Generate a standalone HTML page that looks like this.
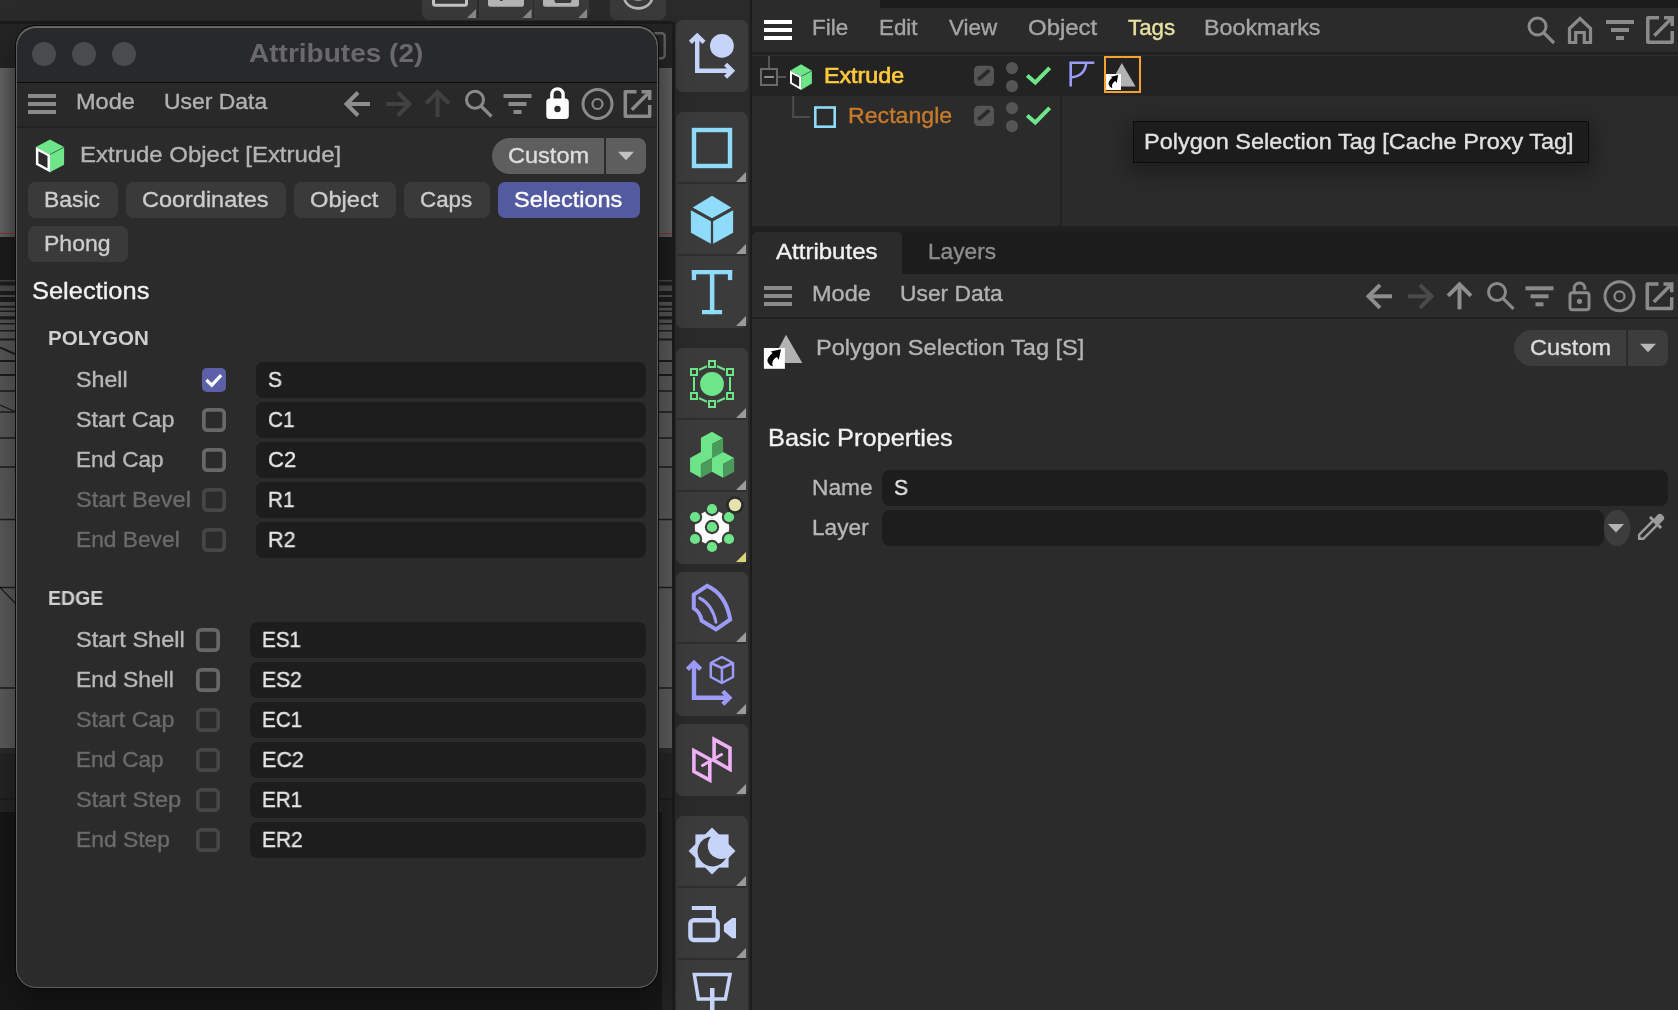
<!DOCTYPE html>
<html lang="en"><head><meta charset="utf-8"><title>Attributes</title>
<style>
*{box-sizing:border-box;margin:0;padding:0}
html,body{width:1678px;height:1010px;overflow:hidden;background:#1d1d1d}
body{position:relative;font-family:"Liberation Sans", sans-serif;-webkit-font-smoothing:antialiased}
.a{position:absolute}
.t{position:absolute;white-space:pre;line-height:1;display:block;transform-origin:0 50%;will-change:transform}
svg{position:absolute;left:0;top:0;overflow:visible}
.fld{position:absolute;background:#1d1d1d;border-radius:7px;height:36px}
.tab{position:absolute;background:#3a3a3a;border-radius:7px;height:36px}
.cb{position:absolute;width:24px;height:24px;border-radius:5.5px;border:3.6px solid #686868}
.cb.d{border-color:#464646}
.tb{position:absolute;left:676px;width:72px;background:#3b3b3b;border-radius:7px}
.dv{position:absolute;left:678px;width:68px;height:2px;background:#2e2e2e}
</style></head>
<body>
<div class="a" style="left:0;top:0;width:673px;height:1010px;background:#1a1a1a"></div>
<div class="a" style="left:0;top:0;width:673px;height:21px;background:#2a2a2a"></div>
<div class="a" style="left:0;top:21.5px;width:673px;height:2.5px;background:#1b1b1b"></div>
<div class="a" style="left:0;top:24px;width:673px;height:44px;background:#242424"></div>
<div class="a" style="left:0;top:68px;width:673px;height:168.5px;background:linear-gradient(90deg,#666 0,#585858 12px,#525252 16px,#525252 658px,#5a5a5a 662px,#606060 673px)"></div>
<div class="a" style="left:0;top:233px;width:673px;height:1.3px;background:#8c3030"></div>
<div class="a" style="left:0;top:236.5px;width:673px;height:44px;background:#1c1c1c"></div>
<div class="a" style="left:0;top:280px;width:673px;height:468px;background:linear-gradient(180deg,#464646 0,#525252 20px,#585858 60px,#5b5b5b 250px,#5c5c5c 468px)"></div>
<svg width="673" height="1010" viewBox="0 0 673 1010"><line x1="0" y1="283.5" x2="673" y2="283.5" stroke="#1d1d1d" stroke-width="4" /><line x1="0" y1="293" x2="673" y2="293" stroke="#1d1d1d" stroke-width="4" /><line x1="0" y1="299.5" x2="673" y2="299.5" stroke="#1d1d1d" stroke-width="5" /><line x1="0" y1="306.7" x2="673" y2="306.7" stroke="#1d1d1d" stroke-width="2" /><line x1="0" y1="311.3" x2="673" y2="311.3" stroke="#1d1d1d" stroke-width="1.6" /><line x1="0" y1="317.8" x2="673" y2="317.8" stroke="#1d1d1d" stroke-width="3.2" /><line x1="0" y1="323.8" x2="673" y2="323.8" stroke="#1d1d1d" stroke-width="1.6" /><line x1="0" y1="330.8" x2="673" y2="330.8" stroke="#1d1d1d" stroke-width="1.6" /><line x1="0" y1="339.5" x2="673" y2="339.5" stroke="#1d1d1d" stroke-width="2" /><line x1="0" y1="361" x2="673" y2="361" stroke="#1d1d1d" stroke-width="2" /><line x1="0" y1="375" x2="673" y2="375" stroke="#1d1d1d" stroke-width="2" /><line x1="0" y1="391" x2="673" y2="391" stroke="#1d1d1d" stroke-width="1.6" /><line x1="0" y1="412" x2="673" y2="412" stroke="#1d1d1d" stroke-width="1.6" /><line x1="0" y1="438" x2="673" y2="438" stroke="#1d1d1d" stroke-width="1.6" /><line x1="0" y1="467" x2="673" y2="467" stroke="#1d1d1d" stroke-width="1.6" /><line x1="0" y1="519.5" x2="673" y2="519.5" stroke="#1d1d1d" stroke-width="1.6" /><line x1="0" y1="587.5" x2="673" y2="587.5" stroke="#1d1d1d" stroke-width="1.6" /><line x1="0" y1="688" x2="673" y2="688" stroke="#1d1d1d" stroke-width="1.6" /><line x1="0" y1="347.5" x2="16" y2="354.5" stroke="#1d1d1d" stroke-width="2" /><line x1="0" y1="405" x2="16" y2="412" stroke="#1b1b1b" stroke-width="1.2" /><line x1="0" y1="587.5" x2="16" y2="604" stroke="#1b1b1b" stroke-width="1.2" /></svg>
<div class="a" style="left:0;top:748px;width:673px;height:5px;background:#2b2b2b"></div>
<div class="a" style="left:0;top:753px;width:673px;height:59px;background:#252525"></div>
<div class="a" style="left:0;top:798px;width:673px;height:2px;background:#1e1e1e"></div>
<div class="a" style="left:0;top:812px;width:673px;height:198px;background:#171717"></div>
<div class="a" style="left:662px;top:800px;width:11px;height:210px;background:#232323"></div>
<div class="a" style="left:658px;top:24px;width:15px;height:44px;background:#242424"></div>
<div class="a" style="left:422px;top:-6px;width:167px;height:25.5px;background:#3a3a3a;border-radius:7px"></div>
<div class="a" style="left:477px;top:0;width:1.5px;height:18px;background:#2c2c2c"></div>
<div class="a" style="left:532.5px;top:0;width:1.5px;height:18px;background:#2c2c2c"></div>
<div class="a" style="left:610px;top:-6px;width:56px;height:25.5px;background:#3a3a3a;border-radius:7px"></div>
<svg width="673" height="80" viewBox="0 0 673 80"><rect x="433.5" y="-10" width="33" height="15.3" rx="2" fill="none" stroke="#c4c4c4" stroke-width="3"/><rect x="488" y="-10" width="36" height="16.8" rx="2.5" fill="#b4b4b4"/><rect x="543" y="-10" width="36" height="16.8" rx="2.5" fill="#b4b4b4"/><rect x="554.5" y="-3" width="17" height="6" rx="2" fill="#3a3a3a"/><rect x="500" y="-2" width="2.5" height="3" fill="#3a3a3a" /><ellipse cx="638.2" cy="-3" rx="14" ry="11.4" fill="none" stroke="#b4b4b4" stroke-width="2.6"/><ellipse cx="638.2" cy="-5" rx="9" ry="5.8" fill="#b4b4b4"/><polygon points="476,9 476,18 467,18" fill="#8a8a8a" /><polygon points="531.5,9 531.5,18 522.5,18" fill="#8a8a8a" /><polygon points="587,9 587,18 578,18" fill="#8a8a8a" /><rect x="644" y="33.3" width="20.7" height="25" rx="3" fill="none" stroke="#626262" stroke-width="2.4"/></svg>
<div class="a" style="left:672px;top:0;width:80px;height:1010px;background:#1c1c1c"></div>
<div class="a" style="left:674.5px;top:0;width:75.5px;height:1010px;background:#2a2a2a"></div>
<div class="a" style="left:672px;top:0;width:3px;height:22px;background:#2a2a2a"></div>
<div class="tb" style="top:20px;height:72px"></div>
<div class="tb" style="top:112px;height:216px"></div>
<div class="tb" style="top:348px;height:216px"></div>
<div class="tb" style="top:572px;height:144px"></div>
<div class="tb" style="top:724px;height:72px"></div>
<div class="tb" style="top:816px;height:214px"></div>
<div class="dv" style="top:182px"></div>
<div class="dv" style="top:254px"></div>
<div class="dv" style="top:418px"></div>
<div class="dv" style="top:490px"></div>
<div class="dv" style="top:642px"></div>
<div class="dv" style="top:886px"></div>
<div class="dv" style="top:958px"></div>
<svg width="1678" height="1010" viewBox="0 0 1678 1010"><polyline points="690.4,42.3 697.2,35.7 704,42.3" fill="none" stroke="#c5d4f8" stroke-width="4.4" /><polyline points="697.2,37 697.2,70.8 731,70.8" fill="none" stroke="#c5d4f8" stroke-width="4.4" /><polyline points="725.6,64.3 732.1,70.8 725.6,77.3" fill="none" stroke="#c5d4f8" stroke-width="4.4" /><circle cx="721.9" cy="45.9" r="11.9" fill="#c5d4f8" /><rect x="694" y="130" width="36" height="36" fill="none" stroke="#8fdcfa" stroke-width="4.4"/><polygon points="746,172 746,182 736,182" fill="#9a9a9a" /><polygon points="712,195.8 731.3,207.6 712,218.2 692.7,207.6" fill="#8fdcfa" /><polygon points="690.9,210.2 710.9,221.3 710.9,243.8 690.9,232.7" fill="#8fdcfa" /><polygon points="733.1,210.2 713.1,221.3 713.1,243.8 733.1,232.7" fill="#8fdcfa" /><polygon points="746,244 746,254 736,254" fill="#9a9a9a" /><rect x="691.8" y="270" width="40.4" height="4.3" fill="#8fdcfa" /><rect x="691.8" y="270" width="4.3" height="10.1" fill="#8fdcfa" /><rect x="727.9" y="270" width="4.3" height="10.1" fill="#8fdcfa" /><rect x="709.9" y="270" width="4.5" height="44.2" fill="#8fdcfa" /><rect x="702" y="310" width="20.1" height="4.2" fill="#8fdcfa" /><polygon points="746,316 746,326 736,326" fill="#9a9a9a" /><circle cx="712" cy="384" r="11.9" fill="#6de588" /><polygon points="712,364 730,372 730,396 712,404 694,396 694,372" fill="none" stroke="#6de588" stroke-width="2"/><rect x="707" y="359" width="10" height="10" fill="#3b3b3b"/><rect x="709" y="361" width="6" height="6" fill="#3b3b3b" stroke="#6de588" stroke-width="2"/><rect x="725" y="367" width="10" height="10" fill="#3b3b3b"/><rect x="727" y="369" width="6" height="6" fill="#3b3b3b" stroke="#6de588" stroke-width="2"/><rect x="725" y="391" width="10" height="10" fill="#3b3b3b"/><rect x="727" y="393" width="6" height="6" fill="#3b3b3b" stroke="#6de588" stroke-width="2"/><rect x="707" y="399" width="10" height="10" fill="#3b3b3b"/><rect x="709" y="401" width="6" height="6" fill="#3b3b3b" stroke="#6de588" stroke-width="2"/><rect x="689" y="391" width="10" height="10" fill="#3b3b3b"/><rect x="691" y="393" width="6" height="6" fill="#3b3b3b" stroke="#6de588" stroke-width="2"/><rect x="689" y="367" width="10" height="10" fill="#3b3b3b"/><rect x="691" y="369" width="6" height="6" fill="#3b3b3b" stroke="#6de588" stroke-width="2"/><polygon points="746,408 746,418 736,418" fill="#9a9a9a" /><polygon points="700.911,437.782 712,431.842 723.089,438.178 712,444.119 712,457.98 700.911,463.921 700.911,477.782 690.059,471.842 690.059,457.98 700.911,452.04" fill="#6de588" /><polygon points="712,444.119 723.089,438.178 723.089,452.04 712,457.98" fill="#4a9a5c" /><polygon points="700.911,463.921 712,457.98 712,471.842 700.911,477.782" fill="#4a9a5c" /><polygon points="723.089,452.04 734.178,457.98 723.089,463.921 723.089,477.782 712,471.842 712,457.98" fill="#6de588" /><polygon points="723.089,463.921 734.178,457.98 734.178,471.842 723.089,477.782" fill="#4a9a5c" /><polygon points="746,480 746,490 736,490" fill="#9a9a9a" /><circle cx="712" cy="527.5" r="17.2" fill="#fbfbfb" /><circle cx="712" cy="527" r="7.2" fill="#3b3b3b" /><circle cx="712" cy="527" r="5.1" fill="#6de588" /><circle cx="712" cy="509" r="7.2" fill="#3b3b3b" /><circle cx="712" cy="509" r="5.1" fill="#6de588" /><circle cx="712" cy="547" r="7.2" fill="#3b3b3b" /><circle cx="712" cy="547" r="5.1" fill="#6de588" /><circle cx="695" cy="517" r="7.2" fill="#3b3b3b" /><circle cx="695" cy="517" r="5.1" fill="#6de588" /><circle cx="729" cy="517" r="7.2" fill="#3b3b3b" /><circle cx="729" cy="517" r="5.1" fill="#6de588" /><circle cx="695" cy="539" r="7.2" fill="#3b3b3b" /><circle cx="695" cy="539" r="5.1" fill="#6de588" /><circle cx="729" cy="539" r="7.2" fill="#3b3b3b" /><circle cx="729" cy="539" r="5.1" fill="#6de588" /><circle cx="735" cy="505" r="8.8" fill="#2a2a2a" /><circle cx="735" cy="505" r="6.2" fill="#e4e3b0" /><polygon points="746,552 746,562 736,562" fill="#d8d678" /><path d="M707.2 585.8 Q725.9 594.1 730.2 619.5 L716 629.4 L701.7 620.7 Q700.5 612.4 693.8 608.4 L693.8 594.5 Z" fill="none" stroke="#9c9cf8" stroke-width="4" stroke-linejoin="miter"/><path d="M699.7 598.1 Q712.4 604.4 716 622.3" fill="none" stroke="#9c9cf8" stroke-width="3" stroke-linecap="round"/><polygon points="746,632 746,642 736,642" fill="#9a9a9a" /><polyline points="687.4,669.4 694,662.8 700.6,669.4" fill="none" stroke="#9c9cf8" stroke-width="4.4" /><polyline points="694,664 694,697.8 728,697.8" fill="none" stroke="#9c9cf8" stroke-width="4.4" /><polyline points="722.8,691.3 729.3,697.8 722.8,704.3" fill="none" stroke="#9c9cf8" stroke-width="4.4" /><path d="M721.9 657 L733 663 V677 L721.9 683 L710.8 677 V663 Z M710.8 663 L721.9 668 L733 663 M721.9 668 V683" fill="none" stroke="#9c9cf8" stroke-width="2.5" stroke-linejoin="round"/><polygon points="746,704 746,714 736,714" fill="#9a9a9a" /><polygon points="693.9,750.5 709.8,759.2 709.8,780.2 693.9,771.5" fill="none" stroke="#f0b0f8" stroke-width="3.6"/><polygon points="714.1,739.4 730,748.1 730,769.5 714.1,760.4" fill="none" stroke="#f0b0f8" stroke-width="3.6"/><line x1="702.5" y1="765.5" x2="721.5" y2="754.5" stroke="#f0b0f8" stroke-width="3" stroke-linecap="round"/><polygon points="746,784 746,794 736,794" fill="#9a9a9a" /><rect x="695.4" y="834.4" width="33.2" height="33.2" fill="#c5d4f8" /><rect x="695.4" y="834.4" width="33.2" height="33.2" fill="#c5d4f8" transform="rotate(45 712 851)"/><path d="M711 836.5 A15 15 0 1 0 726 858 A13.5 13.5 0 0 1 711 836.5 Z" fill="#3b3b3b"/><polygon points="746,876 746,886 736,886" fill="#9a9a9a" /><rect x="690.4" y="920.2" width="27.3" height="19.8" rx="3.5" fill="none" stroke="#c5d4f8" stroke-width="4.4"/><polyline points="691.8,908 713.9,908 713.9,919" fill="none" stroke="#c5d4f8" stroke-width="4.2" /><polygon points="723.9,924.4 732.2,918 736,918 736,938.2 732.2,938.2 723.9,931.5" fill="#c5d4f8" /><polygon points="746,948 746,958 736,958" fill="#9a9a9a" /><polygon points="694.3,974.6 730,974.6 725.4,999 698.3,999" fill="none" stroke="#c5d4f8" stroke-width="3.5"/><rect x="710" y="988" width="4.5" height="24" fill="#c5d4f8" /></svg>
<div class="a" style="left:752px;top:0;width:926px;height:1010px;background:#2b2b2b"></div>
<div class="a" style="left:880px;top:0;width:798px;height:8px;background:#1b1b1b"></div>
<div class="a" style="left:752px;top:52px;width:926px;height:2.5px;background:#202020"></div>
<div class="a" style="left:752px;top:54.5px;width:926px;height:1.5px;background:#2f2f2f"></div>
<div class="a" style="left:752px;top:56px;width:926px;height:40px;background:#232323"></div>
<div class="a" style="left:1060px;top:56px;width:2px;height:169.7px;background:#222"></div>
<div class="a" style="left:752px;top:225.7px;width:926px;height:6px;background:#202020"></div>
<div class="a" style="left:752px;top:231px;width:926px;height:42.5px;background:#1c1c1c"></div>
<div class="a" style="left:752px;top:231.5px;width:150px;height:42.5px;background:#2b2b2b;border-radius:5px 4px 0 0"></div>
<div class="a" style="left:752px;top:317px;width:926px;height:2px;background:#212121"></div>
<div class="a" style="left:1514px;top:330px;width:111.8px;height:36px;background:#3d3d3d;border-radius:18px 0 0 18px"></div>
<div class="a" style="left:1628px;top:330px;width:40px;height:36px;background:#3d3d3d;border-radius:0 8px 8px 0"></div>
<div class="fld" style="left:882px;top:470px;width:786px;border-radius:8px"></div>
<div class="fld" style="left:882px;top:510px;width:722px;border-radius:8px"></div>
<div class="a" style="left:1604.2px;top:510px;width:25.8px;height:36px;background:#3d3d3d;border-radius:12.9px/17px"></div>
<div class="a" style="left:1133px;top:121px;width:455.5px;height:41.5px;background:#1c1c1c;border:1px solid #0c0c0c;box-shadow:0 6px 22px 4px rgba(0,0,0,.32)"></div>
<div class="a" style="left:1104px;top:56px;width:36.5px;height:36.5px;border:2.5px solid #f5a233;background:#222"></div>
<svg width="1678" height="1010" viewBox="0 0 1678 1010"><rect x="764" y="20" width="28" height="4" fill="#ffffff" /><rect x="764" y="28" width="28" height="4" fill="#ffffff" /><rect x="764" y="36" width="28" height="4" fill="#ffffff" /><rect x="764" y="286" width="28" height="4" fill="#8a8a8a" /><rect x="764" y="294" width="28" height="4" fill="#8a8a8a" /><rect x="764" y="302" width="28" height="4" fill="#8a8a8a" /><circle cx="1537.5" cy="26.5" r="8.5" fill="none" stroke="#8a8a8a" stroke-width="3"/><line x1="1543.5" y1="32.5" x2="1554" y2="43" stroke="#8a8a8a" stroke-width="3.2" /><path d="M1569.5 42.5 V28.5 L1580 18.5 L1590.5 28.5 V42.5 H1584.3 V32.5 H1575.7 V42.5 Z" fill="none" stroke="#8a8a8a" stroke-width="3.2" stroke-linejoin="miter"/><rect x="1606" y="20" width="28" height="4" fill="#8a8a8a" /><rect x="1611" y="28" width="18" height="4" fill="#8a8a8a" /><rect x="1616" y="36" width="8" height="4" fill="#8a8a8a" /><path d="M1659 17.8 H1647.8 V42.2 H1672.2 V31" fill="none" stroke="#8a8a8a" stroke-width="3.5" stroke-linejoin="round"/><line x1="1654.3" y1="35.7" x2="1672.2" y2="17.8" stroke="#8a8a8a" stroke-width="3.5" /><polyline points="1664,17.8 1672.2,17.8 1672.2,26" fill="none" stroke="#8a8a8a" stroke-width="3.5" /><polyline points="1380,284.8 1368.5,296.3 1380,307.8" fill="none" stroke="#8e8e8e" stroke-width="4" /><line x1="1369.5" y1="296.3" x2="1392" y2="296.3" stroke="#8e8e8e" stroke-width="4" /><polyline points="1420,284.8 1431.5,296.3 1420,307.8" fill="none" stroke="#4a4a4a" stroke-width="4" /><line x1="1408" y1="296.3" x2="1430.5" y2="296.3" stroke="#4a4a4a" stroke-width="4" /><polyline points="1448,295.8 1459.5,284.3 1471,295.8" fill="none" stroke="#8e8e8e" stroke-width="4" /><line x1="1459.5" y1="285.8" x2="1459.5" y2="309.3" stroke="#8e8e8e" stroke-width="4" /><circle cx="1497" cy="292" r="8.5" fill="none" stroke="#8a8a8a" stroke-width="3"/><line x1="1503" y1="298.3" x2="1513.5" y2="308.8" stroke="#8a8a8a" stroke-width="3.2" /><rect x="1525.5" y="286.3" width="28" height="4" fill="#8a8a8a" /><rect x="1530.5" y="294.3" width="18" height="4" fill="#8a8a8a" /><rect x="1535.5" y="302.3" width="8" height="4" fill="#8a8a8a" /><rect x="1570" y="292.8" width="19" height="17" rx="2.5" fill="none" stroke="#8a8a8a" stroke-width="3"/><path d="M1574.2 292.8 v-4.5 a5.3 5.3 0 0 1 10.6 0 v1.5" fill="none" stroke="#8a8a8a" stroke-width="3"/><circle cx="1579.5" cy="301.3" r="2.6" fill="#8a8a8a" /><circle cx="1619.5" cy="296.3" r="14.5" fill="none" stroke="#8a8a8a" stroke-width="3"/><circle cx="1619.5" cy="296.3" r="5" fill="none" stroke="#8a8a8a" stroke-width="2.2"/><path d="M1658.5 284.1 H1647.3 V308.5 H1671.7 V297.3" fill="none" stroke="#8a8a8a" stroke-width="3.5" stroke-linejoin="round"/><line x1="1653.8" y1="302" x2="1671.7" y2="284.1" stroke="#8a8a8a" stroke-width="3.5" /><polyline points="1663.5,284.1 1671.7,284.1 1671.7,292.3" fill="none" stroke="#8a8a8a" stroke-width="3.5" /><rect x="761" y="69" width="16" height="16" fill="none" stroke="#6a6a6a" stroke-width="2"/><rect x="764.2" y="76" width="9.8" height="2" fill="#8c8c8c" /><rect x="768" y="56" width="2" height="12" fill="#555" /><rect x="778" y="76" width="8" height="2" fill="#555" /><rect x="792.2" y="96" width="2" height="22" fill="#4c4c4c" /><rect x="792.2" y="116" width="17.7" height="2" fill="#4c4c4c" /><polygon points="801.1,64.2 811.9,70.7 801.1,76.4 790,70.7" fill="#6de588" /><polygon points="801.1,76.4 811.9,70.7 811.9,83.6 801.1,89.9" fill="#6de588" /><line x1="801.1" y1="76.4" x2="811.9" y2="70.7" stroke="#3f7a4c" stroke-width="1" /><polygon points="790,70.7 801.1,76.4 801.1,89.9 790,83.6" fill="#fff" /><polygon points="791.968,73.923 799.132,77.6018 799.132,86.677 791.968,82.3982" fill="#232323" /><rect x="815.3" y="107.5" width="19.4" height="19.2" fill="none" stroke="#8fdcfa" stroke-width="2.6"/><rect x="974" y="65.7" width="20" height="20.4" rx="4.5" fill="#555"/><line x1="978.2" y1="79.6" x2="989.3" y2="70.3" stroke="#2a2a2a" stroke-width="3.8" /><circle cx="1012" cy="68.1" r="6.1" fill="#555" /><circle cx="1012" cy="86.1" r="6.1" fill="#555" /><polyline points="1027.2,75.4 1035.3,82.4 1049.7,67.9" fill="none" stroke="#6de588" stroke-width="4" /><rect x="974" y="105.7" width="20" height="20.4" rx="4.5" fill="#555"/><line x1="978.2" y1="119.6" x2="989.3" y2="110.3" stroke="#2a2a2a" stroke-width="3.8" /><circle cx="1012" cy="108.1" r="6.1" fill="#555" /><circle cx="1012" cy="126.1" r="6.1" fill="#555" /><polyline points="1027.2,115.4 1035.3,122.4 1049.7,107.9" fill="none" stroke="#6de588" stroke-width="4" /><path d="M1070.7 86.6 V62.8 H1094.3 M1086.2 63 Q1085 76 1071.2 77.5" fill="none" stroke="#9c9cf8" stroke-width="2.6"/><polygon points="1121.8,63 1108.7,86.6 1135.6,86.6" fill="#b2b2b2" /><rect x="1106" y="74" width="15" height="16" fill="#fff" /><path transform="translate(1106 74) scale(0.714286 0.761905)" d="M17.1,1.2 L6.9,3.5 L8.7,5 Q2.7,9.7 3.7,14.1 Q5,17.1 8.9,18.8 Q6.9,12.6 12.9,9.2 L14.9,11.9 Z" fill="#000"/><polygon points="786,334.7 770.9,362.9 802.3,362.9" fill="#b2b2b2" /><rect x="763.9" y="348" width="21" height="20.8" fill="#fff" /><path transform="translate(763.9 348) scale(1 0.990476)" d="M17.1,1.2 L6.9,3.5 L8.7,5 Q2.7,9.7 3.7,14.1 Q5,17.1 8.9,18.8 Q6.9,12.6 12.9,9.2 L14.9,11.9 Z" fill="#000"/><polygon points="1640,343.8 1656,343.8 1648,352.3" fill="#b6b6b6" /><polygon points="1608,524 1624,524 1616,532.5" fill="#b4b4b4" /><g transform="translate(1650.5 527.5) rotate(45)"><rect x="-3.9" y="-17.2" width="7.8" height="10" rx="3.2" fill="#9c9c9c"/><rect x="-8" y="-8.6" width="16" height="3" rx="1" fill="#9c9c9c"/><path d="M-2.9 -6 V13.1 L0 16 L2.9 13.1 V-6" fill="none" stroke="#9c9c9c" stroke-width="2.5"/></g></svg>
<span id="t36" class="t" style="left:812.00px;top:17px;font-size:22px;color:#a6a6a6;font-weight:400;letter-spacing:0.000px;transform:scaleX(1.0215);-webkit-text-stroke:0.35px #a6a6a6;">File</span>
<span id="t37" class="t" style="left:879.00px;top:17px;font-size:22px;color:#a6a6a6;font-weight:400;letter-spacing:0.000px;transform:scaleX(1.0163);-webkit-text-stroke:0.35px #a6a6a6;">Edit</span>
<span id="t38" class="t" style="left:949.00px;top:17px;font-size:22px;color:#a6a6a6;font-weight:400;letter-spacing:0.000px;transform:scaleX(1.0162);-webkit-text-stroke:0.35px #a6a6a6;">View</span>
<span id="t39" class="t" style="left:1028.00px;top:17px;font-size:22px;color:#a6a6a6;font-weight:400;letter-spacing:0.000px;transform:scaleX(1.0884);-webkit-text-stroke:0.35px #a6a6a6;">Object</span>
<span id="t40" class="t" style="left:1128.00px;top:17px;font-size:22px;color:#e9e2a4;font-weight:400;letter-spacing:0.000px;transform:scaleX(1.0160);-webkit-text-stroke:0.35px #e9e2a4;">Tags</span>
<span id="t41" class="t" style="left:1204.00px;top:17px;font-size:22px;color:#a6a6a6;font-weight:400;letter-spacing:0.000px;transform:scaleX(1.0585);-webkit-text-stroke:0.35px #a6a6a6;">Bookmarks</span>
<span id="t42" class="t" style="left:824.00px;top:65px;font-size:22px;color:#ffc93a;font-weight:400;letter-spacing:0.000px;transform:scaleX(1.0565);-webkit-text-stroke:0.70px #ffc93a;">Extrude</span>
<span id="t43" class="t" style="left:848.00px;top:105px;font-size:22px;color:#c87a2a;font-weight:400;letter-spacing:0.000px;transform:scaleX(1.0514);-webkit-text-stroke:0.35px #c87a2a;">Rectangle</span>
<span id="t45" class="t" style="left:776.00px;top:241px;font-size:22px;color:#f2f2f2;font-weight:400;letter-spacing:0.000px;transform:scaleX(1.0930);-webkit-text-stroke:0.35px #f2f2f2;">Attributes</span>
<span id="t46" class="t" style="left:928.00px;top:241px;font-size:22px;color:#8e8e8e;font-weight:400;letter-spacing:0.000px;transform:scaleX(1.0311);-webkit-text-stroke:0.35px #8e8e8e;">Layers</span>
<span id="t47" class="t" style="left:812.00px;top:283px;font-size:22px;color:#b2b2b2;font-weight:400;letter-spacing:0.000px;transform:scaleX(1.0677);-webkit-text-stroke:0.35px #b2b2b2;">Mode</span>
<span id="t48" class="t" style="left:900.00px;top:283px;font-size:22px;color:#b2b2b2;font-weight:400;letter-spacing:0.000px;transform:scaleX(1.0382);-webkit-text-stroke:0.35px #b2b2b2;">User Data</span>
<span id="t49" class="t" style="left:816.00px;top:337px;font-size:22px;color:#b4b4b4;font-weight:400;letter-spacing:0.000px;transform:scaleX(1.0723);-webkit-text-stroke:0.35px #b4b4b4;">Polygon Selection Tag [S]</span>
<span id="t50" class="t" style="left:1530.00px;top:337px;font-size:22px;color:#dcdcdc;font-weight:400;letter-spacing:0.000px;transform:scaleX(1.0697);-webkit-text-stroke:0.35px #dcdcdc;">Custom</span>
<span id="t51" class="t" style="left:768.00px;top:426px;font-size:24px;color:#f2f2f2;font-weight:400;letter-spacing:0.000px;transform:scaleX(1.0568);-webkit-text-stroke:0.35px #f2f2f2;">Basic Properties</span>
<span id="t52" class="t" style="left:812.00px;top:477px;font-size:22px;color:#b8b8b8;font-weight:400;letter-spacing:0.000px;transform:scaleX(1.0323);-webkit-text-stroke:0.35px #b8b8b8;">Name</span>
<span id="t53" class="t" style="left:812.00px;top:517px;font-size:22px;color:#b8b8b8;font-weight:400;letter-spacing:0.000px;transform:scaleX(1.0305);-webkit-text-stroke:0.35px #b8b8b8;">Layer</span>
<span id="t54" class="t" style="left:894.00px;top:477px;font-size:22px;color:#e4e4e4;font-weight:400;letter-spacing:0.000px;transform:scaleX(0.9600);-webkit-text-stroke:0.35px #e4e4e4;">S</span>
<span id="t44" class="t" style="left:1144.00px;top:131px;font-size:22px;color:#e2e2e2;font-weight:400;letter-spacing:0.000px;transform:scaleX(1.0666);-webkit-text-stroke:0.35px #e2e2e2;">Polygon Selection Tag [Cache Proxy Tag]</span>
<div class="a" style="left:16px;top:26px;width:642px;height:962px;border-radius:20px;background:#2b2b2b;box-shadow:0 0 0 1px #0a0a0a,0 14px 34px 2px rgba(0,0,0,.38);overflow:hidden">
<div class="a" style="left:-16px;top:-26px;width:1678px;height:1010px">
<div class="a" style="left:16px;top:26px;width:642px;height:56px;background:#28292b"></div>
<div class="a" style="left:16px;top:81.5px;width:642px;height:1.5px;background:#0c0c0c"></div>
<div class="a" style="left:16px;top:83px;width:642px;height:42.5px;background:#29292a"></div>
<div class="a" style="left:16px;top:125.5px;width:642px;height:2px;background:#222"></div>
<div class="a" style="left:31.9px;top:41.8px;width:24.2px;height:24.2px;border-radius:50%;background:#4a4b4d"></div>
<div class="a" style="left:71.9px;top:41.8px;width:24.2px;height:24.2px;border-radius:50%;background:#4a4b4d"></div>
<div class="a" style="left:111.9px;top:41.8px;width:24.2px;height:24.2px;border-radius:50%;background:#4a4b4d"></div>
<div class="a" style="left:492px;top:138px;width:111.8px;height:36px;background:#5e5e5e;border-radius:18px 0 0 18px"></div>
<div class="a" style="left:606px;top:138px;width:40px;height:36px;background:#5e5e5e;border-radius:0 8px 8px 0"></div>
<div class="tab" style="left:28px;top:182px;width:90px"></div>
<div class="tab" style="left:126px;top:182px;width:160px"></div>
<div class="tab" style="left:294px;top:182px;width:102px"></div>
<div class="tab" style="left:404px;top:182px;width:86px"></div>
<div class="tab" style="left:498px;top:182px;width:142px;background:#545aa0"></div>
<div class="tab" style="left:28px;top:226px;width:100px"></div>
<div class="fld" style="left:256px;top:362px;width:390px"></div>
<div class="a" style="left:202px;top:368px;width:24px;height:24px;border-radius:5px;background:#5c60a8"></div>
<div class="fld" style="left:256px;top:402px;width:390px"></div>
<div class="fld" style="left:256px;top:442px;width:390px"></div>
<div class="fld" style="left:256px;top:482px;width:390px"></div>
<div class="fld" style="left:256px;top:522px;width:390px"></div>
<div class="fld" style="left:250px;top:622px;width:396px"></div>
<div class="fld" style="left:250px;top:662px;width:396px"></div>
<div class="fld" style="left:250px;top:702px;width:396px"></div>
<div class="fld" style="left:250px;top:742px;width:396px"></div>
<div class="fld" style="left:250px;top:782px;width:396px"></div>
<div class="fld" style="left:250px;top:822px;width:396px"></div>
<svg width="1678" height="1010" viewBox="0 0 1678 1010"><rect x="28" y="94" width="28" height="4" fill="#8a8a8a" /><rect x="28" y="102" width="28" height="4" fill="#8a8a8a" /><rect x="28" y="110" width="28" height="4" fill="#8a8a8a" /><rect x="203.85" y="409.85" width="20.3" height="20.3" rx="3.6" fill="none" stroke="#686868" stroke-width="3.7"/><rect x="203.85" y="449.85" width="20.3" height="20.3" rx="3.6" fill="none" stroke="#686868" stroke-width="3.7"/><rect x="203.85" y="489.85" width="20.3" height="20.3" rx="3.6" fill="none" stroke="#464646" stroke-width="3.7"/><rect x="203.85" y="529.85" width="20.3" height="20.3" rx="3.6" fill="none" stroke="#464646" stroke-width="3.7"/><rect x="197.85" y="629.85" width="20.3" height="20.3" rx="3.6" fill="none" stroke="#686868" stroke-width="3.7"/><rect x="197.85" y="669.85" width="20.3" height="20.3" rx="3.6" fill="none" stroke="#686868" stroke-width="3.7"/><rect x="197.85" y="709.85" width="20.3" height="20.3" rx="3.6" fill="none" stroke="#464646" stroke-width="3.7"/><rect x="197.85" y="749.85" width="20.3" height="20.3" rx="3.6" fill="none" stroke="#464646" stroke-width="3.7"/><rect x="197.85" y="789.85" width="20.3" height="20.3" rx="3.6" fill="none" stroke="#464646" stroke-width="3.7"/><rect x="197.85" y="829.85" width="20.3" height="20.3" rx="3.6" fill="none" stroke="#464646" stroke-width="3.7"/><polyline points="358,92.5 346.5,104 358,115.5" fill="none" stroke="#8e8e8e" stroke-width="4" /><line x1="347.5" y1="104" x2="370" y2="104" stroke="#8e8e8e" stroke-width="4" /><polyline points="398,92.5 409.5,104 398,115.5" fill="none" stroke="#414141" stroke-width="4" /><line x1="386" y1="104" x2="408.5" y2="104" stroke="#414141" stroke-width="4" /><polyline points="426,103.5 437.5,92 449,103.5" fill="none" stroke="#414141" stroke-width="4" /><line x1="437.5" y1="93.5" x2="437.5" y2="117" stroke="#414141" stroke-width="4" /><circle cx="475" cy="99.7" r="8.5" fill="none" stroke="#8a8a8a" stroke-width="3"/><line x1="481" y1="106" x2="491.5" y2="116.5" stroke="#8a8a8a" stroke-width="3.2" /><rect x="503.5" y="94" width="28" height="4" fill="#8a8a8a" /><rect x="508.5" y="102" width="18" height="4" fill="#8a8a8a" /><rect x="513.5" y="110" width="8" height="4" fill="#8a8a8a" /><rect x="546.3" y="98.4" width="22.5" height="20.5" rx="3.5" fill="#fff"/><path d="M551.9 99.5 v-5 a5.6 5.6 0 0 1 11.2 0 v5" fill="none" stroke="#fff" stroke-width="3.4"/><circle cx="557.5" cy="109" r="3.2" fill="#2b2b2b" /><circle cx="597.5" cy="104" r="14.5" fill="none" stroke="#8a8a8a" stroke-width="3"/><circle cx="597.5" cy="104" r="5" fill="none" stroke="#8a8a8a" stroke-width="2.2"/><path d="M636.5 91.8 H625.3 V116.2 H649.7 V105" fill="none" stroke="#8a8a8a" stroke-width="3.5" stroke-linejoin="round"/><line x1="631.8" y1="109.7" x2="649.7" y2="91.8" stroke="#8a8a8a" stroke-width="3.5" /><polyline points="641.5,91.8 649.7,91.8 649.7,100" fill="none" stroke="#8a8a8a" stroke-width="3.5" /><polygon points="50,139.4 64.1,147.1 50,154.5 35.9,147.1" fill="#6de588" /><polygon points="50,154.5 64.1,147.1 64.1,164.7 50,172.3" fill="#6de588" /><line x1="50" y1="154.5" x2="64.1" y2="147.1" stroke="#3f7a4c" stroke-width="1" /><polygon points="35.9,147.1 50,154.5 50,172.3 35.9,164.7" fill="#fff" /><polygon points="38.4,151.235 47.5,156.011 47.5,168.165 38.4,163.189" fill="#2b2b2b" /><polygon points="618,151.8 634,151.8 626,160.3" fill="#c2c2c2" /><polyline points="206.4,380 211.8,385.2 221.2,375.1" fill="none" stroke="#fff" stroke-width="3.2" /></svg>
<span id="t0" class="t" style="left:249.00px;top:40px;font-size:26px;color:#69696b;font-weight:700;letter-spacing:0.000px;transform:scaleX(1.0775);">Attributes (2)</span>
<span id="t1" class="t" style="left:76.00px;top:91px;font-size:22px;color:#b2b2b2;font-weight:400;letter-spacing:0.000px;transform:scaleX(1.0690);-webkit-text-stroke:0.35px #b2b2b2;">Mode</span>
<span id="t2" class="t" style="left:164.00px;top:91px;font-size:22px;color:#b2b2b2;font-weight:400;letter-spacing:0.000px;transform:scaleX(1.0423);-webkit-text-stroke:0.35px #b2b2b2;">User Data</span>
<span id="t3" class="t" style="left:80.00px;top:144px;font-size:22px;color:#b4b4b4;font-weight:400;letter-spacing:0.000px;transform:scaleX(1.0897);-webkit-text-stroke:0.35px #b4b4b4;">Extrude Object [Extrude]</span>
<span id="t4" class="t" style="left:508.00px;top:145px;font-size:22px;color:#dedede;font-weight:400;letter-spacing:0.000px;transform:scaleX(1.0697);-webkit-text-stroke:0.35px #dedede;">Custom</span>
<span id="t5" class="t" style="left:44.00px;top:189px;font-size:22px;color:#cdcdcd;font-weight:400;letter-spacing:0.000px;transform:scaleX(1.0410);-webkit-text-stroke:0.35px #cdcdcd;">Basic</span>
<span id="t6" class="t" style="left:142.00px;top:189px;font-size:22px;color:#cdcdcd;font-weight:400;letter-spacing:0.000px;transform:scaleX(1.0665);-webkit-text-stroke:0.35px #cdcdcd;">Coordinates</span>
<span id="t7" class="t" style="left:310.00px;top:189px;font-size:22px;color:#cdcdcd;font-weight:400;letter-spacing:0.000px;transform:scaleX(1.0754);-webkit-text-stroke:0.35px #cdcdcd;">Object</span>
<span id="t8" class="t" style="left:420.00px;top:189px;font-size:22px;color:#cdcdcd;font-weight:400;letter-spacing:0.000px;transform:scaleX(1.0158);-webkit-text-stroke:0.35px #cdcdcd;">Caps</span>
<span id="t9" class="t" style="left:514.00px;top:189px;font-size:22px;color:#ffffff;font-weight:400;letter-spacing:0.000px;transform:scaleX(1.0676);-webkit-text-stroke:0.35px #ffffff;">Selections</span>
<span id="t10" class="t" style="left:44.00px;top:233px;font-size:22px;color:#cdcdcd;font-weight:400;letter-spacing:0.000px;transform:scaleX(1.0468);-webkit-text-stroke:0.35px #cdcdcd;">Phong</span>
<span id="t11" class="t" style="left:32.00px;top:279px;font-size:24px;color:#f2f2f2;font-weight:400;letter-spacing:0.000px;transform:scaleX(1.0598);-webkit-text-stroke:0.35px #f2f2f2;">Selections</span>
<span id="t12" class="t" style="left:48.00px;top:328px;font-size:20px;color:#cfcfcf;font-weight:700;letter-spacing:0.000px;transform:scaleX(1.0272);">POLYGON</span>
<span id="t13" class="t" style="left:76.00px;top:369px;font-size:22px;color:#b8b8b8;font-weight:400;letter-spacing:0.000px;transform:scaleX(1.0561);-webkit-text-stroke:0.35px #b8b8b8;">Shell</span>
<span id="t14" class="t" style="left:268.00px;top:369px;font-size:22px;color:#e4e4e4;font-weight:400;letter-spacing:0.000px;transform:scaleX(0.9600);-webkit-text-stroke:0.35px #e4e4e4;">S</span>
<span id="t15" class="t" style="left:76.00px;top:409px;font-size:22px;color:#b8b8b8;font-weight:400;letter-spacing:0.000px;transform:scaleX(1.0589);-webkit-text-stroke:0.35px #b8b8b8;">Start Cap</span>
<span id="t16" class="t" style="left:268.00px;top:409px;font-size:22px;color:#e4e4e4;font-weight:400;letter-spacing:0.000px;transform:scaleX(0.9400);-webkit-text-stroke:0.35px #e4e4e4;">C1</span>
<span id="t17" class="t" style="left:76.00px;top:449px;font-size:22px;color:#b8b8b8;font-weight:400;letter-spacing:0.000px;transform:scaleX(1.0231);-webkit-text-stroke:0.35px #b8b8b8;">End Cap</span>
<span id="t18" class="t" style="left:268.00px;top:449px;font-size:22px;color:#e4e4e4;font-weight:400;letter-spacing:0.000px;transform:scaleX(0.9890);-webkit-text-stroke:0.35px #e4e4e4;">C2</span>
<span id="t19" class="t" style="left:76.00px;top:489px;font-size:22px;color:#6b6b6b;font-weight:400;letter-spacing:0.000px;transform:scaleX(1.0675);-webkit-text-stroke:0.35px #6b6b6b;">Start Bevel</span>
<span id="t20" class="t" style="left:268.00px;top:489px;font-size:22px;color:#e4e4e4;font-weight:400;letter-spacing:0.000px;transform:scaleX(0.9400);-webkit-text-stroke:0.35px #e4e4e4;">R1</span>
<span id="t21" class="t" style="left:76.00px;top:529px;font-size:22px;color:#6b6b6b;font-weight:400;letter-spacing:0.000px;transform:scaleX(1.0339);-webkit-text-stroke:0.35px #6b6b6b;">End Bevel</span>
<span id="t22" class="t" style="left:268.00px;top:529px;font-size:22px;color:#e4e4e4;font-weight:400;letter-spacing:0.000px;transform:scaleX(0.9774);-webkit-text-stroke:0.35px #e4e4e4;">R2</span>
<span id="t23" class="t" style="left:48.00px;top:588px;font-size:20px;color:#cfcfcf;font-weight:700;letter-spacing:0.000px;transform:scaleX(0.9751);">EDGE</span>
<span id="t24" class="t" style="left:76.00px;top:629px;font-size:22px;color:#b8b8b8;font-weight:400;letter-spacing:0.000px;transform:scaleX(1.0725);-webkit-text-stroke:0.35px #b8b8b8;">Start Shell</span>
<span id="t25" class="t" style="left:262.00px;top:629px;font-size:22px;color:#e4e4e4;font-weight:400;letter-spacing:0.000px;transform:scaleX(0.9400);-webkit-text-stroke:0.35px #e4e4e4;">ES1</span>
<span id="t26" class="t" style="left:76.00px;top:669px;font-size:22px;color:#b8b8b8;font-weight:400;letter-spacing:0.000px;transform:scaleX(1.0379);-webkit-text-stroke:0.35px #b8b8b8;">End Shell</span>
<span id="t27" class="t" style="left:262.00px;top:669px;font-size:22px;color:#e4e4e4;font-weight:400;letter-spacing:0.000px;transform:scaleX(0.9595);-webkit-text-stroke:0.35px #e4e4e4;">ES2</span>
<span id="t28" class="t" style="left:76.00px;top:709px;font-size:22px;color:#6b6b6b;font-weight:400;letter-spacing:0.000px;transform:scaleX(1.0589);-webkit-text-stroke:0.35px #6b6b6b;">Start Cap</span>
<span id="t29" class="t" style="left:262.00px;top:709px;font-size:22px;color:#e4e4e4;font-weight:400;letter-spacing:0.000px;transform:scaleX(0.9400);-webkit-text-stroke:0.35px #e4e4e4;">EC1</span>
<span id="t30" class="t" style="left:76.00px;top:749px;font-size:22px;color:#6b6b6b;font-weight:400;letter-spacing:0.000px;transform:scaleX(1.0231);-webkit-text-stroke:0.35px #6b6b6b;">End Cap</span>
<span id="t31" class="t" style="left:262.00px;top:749px;font-size:22px;color:#e4e4e4;font-weight:400;letter-spacing:0.000px;transform:scaleX(0.9786);-webkit-text-stroke:0.35px #e4e4e4;">EC2</span>
<span id="t32" class="t" style="left:76.00px;top:789px;font-size:22px;color:#6b6b6b;font-weight:400;letter-spacing:0.000px;transform:scaleX(1.0760);-webkit-text-stroke:0.35px #6b6b6b;">Start Step</span>
<span id="t33" class="t" style="left:262.00px;top:789px;font-size:22px;color:#e4e4e4;font-weight:400;letter-spacing:0.000px;transform:scaleX(0.9400);-webkit-text-stroke:0.35px #e4e4e4;">ER1</span>
<span id="t34" class="t" style="left:76.00px;top:829px;font-size:22px;color:#6b6b6b;font-weight:400;letter-spacing:0.000px;transform:scaleX(1.0371);-webkit-text-stroke:0.35px #6b6b6b;">End Step</span>
<span id="t35" class="t" style="left:262.00px;top:829px;font-size:22px;color:#e4e4e4;font-weight:400;letter-spacing:0.000px;transform:scaleX(0.9514);-webkit-text-stroke:0.35px #e4e4e4;">ER2</span>
</div>
<div class="a" style="left:0;top:0;width:642px;height:962px;border-radius:20px;box-shadow:inset 0 0 0 1px #5e5e5e,inset 0 1px 0 1px #6a6a6a"></div>
</div>
</body></html>
